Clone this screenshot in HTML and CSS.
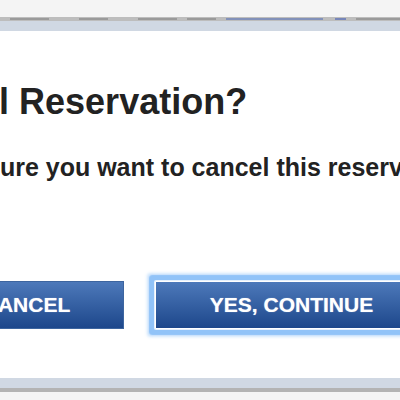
FILE: index.html
```html
<!DOCTYPE html>
<html>
<head>
<meta charset="utf-8">
<link rel="stylesheet" href="styles.css">
</head>
<body>
<div class="topbar">
  <div class="top-light"></div>
  <div class="top-line">
    <i class="mark m1"></i>
    <i class="mark m2"></i>
    <i class="mark m3"></i>
    <i class="mark m4"></i>
    <i class="mark link"></i>
    <i class="mark box"></i>
    <i class="mark m5"></i>
  </div>
  <div class="top-band"></div>
</div>
<div class="dialog">
  <h1 class="title">Cancel Reservation?</h1>
  <p class="message">Are you sure you want to cancel this reservation?</p>
  <div class="actions">
    <button class="btn btn-cancel">CANCEL</button>
    <button class="btn btn-yes">YES, CONTINUE</button>
  </div>
</div>
<div class="bottombar">
  <div class="bottom-band"></div>
  <div class="bottom-line"></div>
  <div class="bottom-light"></div>
</div>
</body>
</html>
```
FILE: styles.css
```css
html, body {
  margin: 0;
  padding: 0;
  width: 400px;
  height: 400px;
  overflow: hidden;
  background: #ffffff;
  font-family: "Liberation Sans", Arial, sans-serif;
}

.topbar {
  display: flex;
  flex-direction: column;
}

.top-light {
  height: 17px;
  background: #f4f4f4;
}

.top-line {
  height: 4px;
  background: #bdbdbd;
  display: flex;
  align-items: center;
}

.mark {
  height: 2px;
  background: #8c8c8c;
  opacity: 0.7;
  filter: blur(0.5px);
}

.m1 { width: 40px; margin-left: 10px; }
.m2 { width: 30px; margin-left: 30px; }
.m3 { width: 40px; margin-left: 30px; }
.m4 { width: 30px; margin-left: 10px; }
.link { width: 100px; margin-left: 10px; background: #6a7fb8; }
.box { width: 12px; margin-left: 12px; background: #5a6fb8; }
.m5 { width: 45px; margin-left: 10px; }

.top-band {
  height: 10px;
  background: #d0d8e3;
}

.dialog {
  height: 347px;
  box-sizing: border-box;
  padding-top: 53px;
  margin-left: -109px;
  width: 640px;
}

.title {
  margin: 0;
  font-size: 36px;
  line-height: 36px;
  font-weight: bold;
  color: #222222;
}

.message {
  margin: 35px 0 0 -5px;
  font-size: 25px;
  line-height: 25px;
  font-weight: bold;
  color: #222222;
  white-space: nowrap;
}

.actions {
  display: flex;
  gap: 31px;
  margin-top: 101px;
  margin-left: 38px;
}

.btn {
  height: 48px;
  border: 1px solid #3d659f;
  background: linear-gradient(#4d79ba, #1d478b);
  color: #ffffff;
  font-family: "Liberation Sans", Arial, sans-serif;
  font-weight: bold;
  font-size: 21px;
  padding: 0;
  text-shadow: 0 0 1px rgba(255, 255, 255, 0.6);
}

.btn-cancel {
  width: 195px;
}

.btn-yes {
  width: 273px;
  border-color: #ffffff;
  border-radius: 1px;
  box-shadow: 0 0 0 1px #e6f1fd, 0 0 1px 6px #91c3f8, 0 0 3px 8px rgba(145, 195, 248, 0.45);
}

.bottombar {
  display: flex;
  flex-direction: column;
}

.bottom-band {
  height: 10px;
  background: #d0d8e3;
}

.bottom-line {
  height: 4px;
  background: #b3b3b3;
}

.bottom-light {
  height: 8px;
  background: #f4f4f4;
}
```
